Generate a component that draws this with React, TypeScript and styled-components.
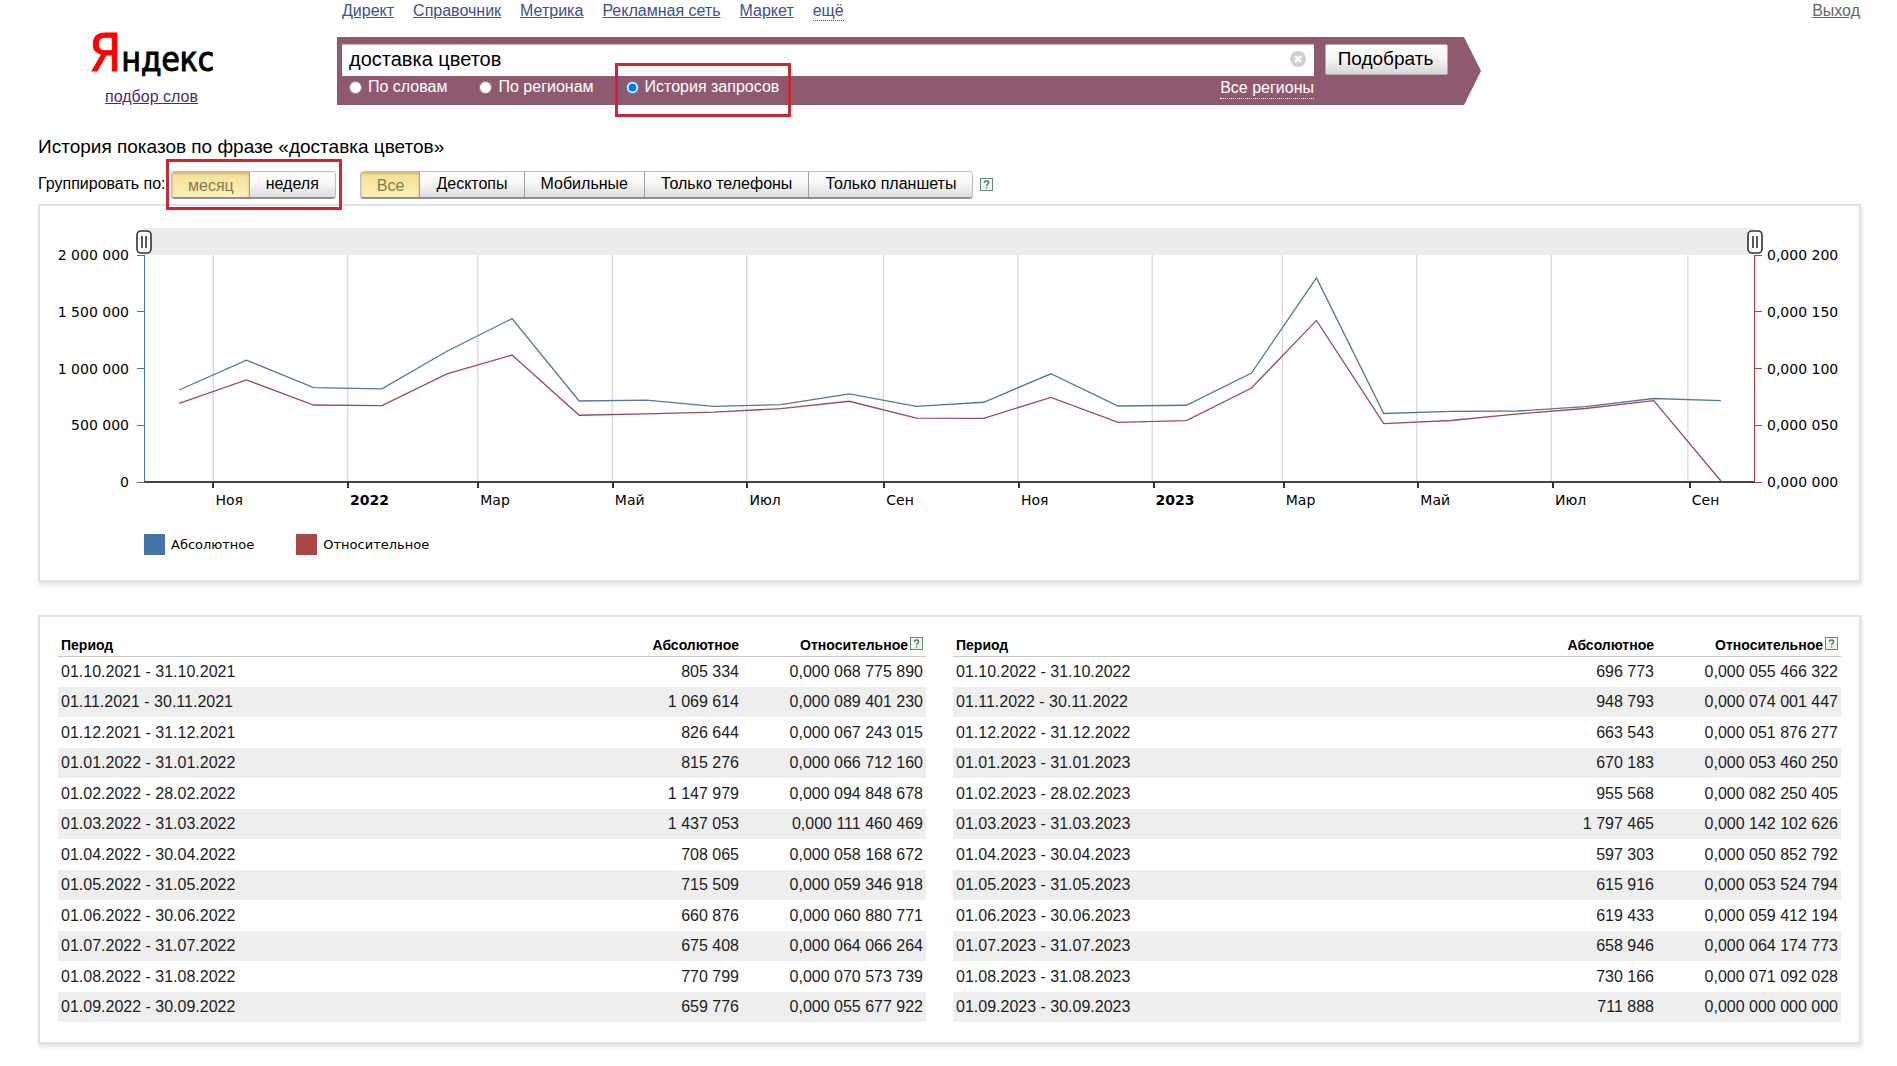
import React from 'react';
import styled, { createGlobalStyle, css } from 'styled-components';

const GlobalStyle = createGlobalStyle`
  *, *::before, *::after { box-sizing: border-box; }
  body {
    margin: 0;
    background: #fff;
    color: #000;
    font: 16px/20px "Liberation Sans", Arial, sans-serif;
  }
  button, input { font-family: inherit; }
`;

const chartFont = '"DejaVu Sans", Verdana, sans-serif';

/* ---------- header ---------- */

const Header = styled.header`
  display: grid;
  grid-template-columns: 337px minmax(0, 1fr) 416px;
`;

const Brand = styled.div`
  width: 303px;
  padding-top: 25px;
  text-align: center;
`;

const Logo = styled.a`
  display: block;
  height: 62px;
  color: #000;
  font: 33px/56px "DejaVu Sans Condensed", "DejaVu Sans", sans-serif;
  text-decoration: none;
  white-space: nowrap;
  -webkit-text-stroke: 1px currentColor;
`;

const LogoInitial = styled.span`
  color: #f00;
  font-size: 52px;
`;

const BrandLink = styled.a`
  color: #4a2a7a;
`;

const Services = styled.nav`
  display: flex;
  gap: 19px;
  height: 37px;
  padding: 1px 0 0 5px;
  white-space: nowrap;
`;

const ServiceLink = styled.a<{ $dotted?: boolean }>`
  color: #3a4f9a;
  ${(p) =>
    p.$dotted &&
    css`
      align-self: flex-start;
      line-height: 19px;
      text-decoration: none;
      border-bottom: 1px dotted #3a4f9a;
    `}
`;

const Exit = styled.a`
  justify-self: end;
  align-self: start;
  margin: 1px 37px 0 0;
  color: #666;
`;

const SearchForm = styled.form`
  display: grid;
  grid-template-columns: minmax(0, 1fr) 123px;
  grid-template-rows: 32px auto;
  column-gap: 11px;
  height: 68px;
  padding: 7px 33px 0 5px;
  background: #8f5a70;
  clip-path: polygon(0 0, calc(100% - 17px) 0, 100% 50%, calc(100% - 17px) 100%, 0 100%);
`;

const SearchField = styled.div`
  display: flex;
  align-items: flex-start;
  padding-right: 8px;
  background: #fff;
  border-top: 1px solid #cdb9c3;
`;

const SearchInput = styled.input`
  flex: 1;
  min-width: 0;
  height: 28px;
  padding: 0 7px;
  border: 0;
  outline: 0;
  background: transparent;
  color: #000;
  font-size: 20px;
`;

const ClearButton = styled.button`
  display: flex;
  padding: 6px 0 0;
  border: 0;
  background: none;
`;

const SubmitButton = styled.button`
  height: 31px;
  padding: 0 2px 2px 0;
  border: 1px solid #b9a9b1;
  border-radius: 2px;
  background: linear-gradient(#fff, #f4f4f4 50%, #d6d6d6);
  color: #000;
  font-size: 19px;
`;

const Modes = styled.div`
  display: flex;
  align-items: flex-start;
  padding: 1px 0 0 7px;
  color: #fff;
`;

const ModeOption = styled.label`
  display: flex;
  align-items: center;
  gap: 6px;
  margin-right: 32px;
  white-space: nowrap;
`;

const Radio = styled.input`
  width: 13px;
  height: 13px;
  margin: 0;
`;

const RegionsLink = styled.a`
  margin-left: auto;
  color: #fff;
  line-height: 21px;
  text-decoration: none;
  border-bottom: 1px dotted #fff;
  white-space: nowrap;
`;

const Marked = styled.div`
  position: relative;
  margin-right: 24px;
`;

const Mark = styled.span<{ $inset: string }>`
  position: absolute;
  inset: ${(p) => p.$inset};
  border: 3px solid #cd2734;
  pointer-events: none;
`;

const SearchArea = styled.div`
  position: relative;
`;

const ModeMark = styled.span`
  position: absolute;
  top: 63px;
  left: 278px;
  width: 176px;
  height: 54px;
  border: 3px solid #cd2734;
  pointer-events: none;
`;

/* ---------- page body ---------- */

const Main = styled.main`
  padding: 29px 36px 22px 38px;
`;

const Title = styled.h1`
  margin: 0;
  font-size: 19px;
  line-height: 22px;
  font-weight: 400;
`;

const Toolbar = styled.div`
  display: flex;
  align-items: center;
  height: 28px;
  margin: 13px 0 5px;
  white-space: nowrap;
`;

const ToolbarLabel = styled.span`
  width: 133px;
  padding-bottom: 2px;
`;

const Segments = styled.div`
  display: flex;
  height: 28px;
  border: 1px solid #bdbdbd;
  border-bottom: 2px solid #8f8f8f;
  border-radius: 4px;
  overflow: hidden;
`;

const Segment = styled.button<{ $active?: boolean }>`
  padding: 0 16px 2px;
  border: 0;
  background: linear-gradient(#fff, #f8f8f8 45%, #dcdcdc);
  color: #000;
  font-size: 16px;
  & + & {
    border-left: 1px solid #a0a0a0;
  }
  ${(p) =>
    p.$active &&
    css`
      padding: 3px 15px 0 16px;
      background: linear-gradient(#f6df95, #ffefb8);
      box-shadow: inset 0 2px 3px #c9b77c;
      color: #857a52;
    `}
`;

const HelpButton = styled.button`
  display: inline-flex;
  padding: 0;
  border: 0;
  background: none;
`;

const FilterHelp = styled.span`
  display: inline-flex;
  margin-left: 7px;
  padding-bottom: 2px;
`;

const Panel = styled.section`
  border: 2px solid #e2e2e2;
  background: #fff;
  box-shadow: 1px 3px 4px #e2e2e2;
`;

/* ---------- chart ---------- */

const ChartPanel = styled(Panel)`
  padding: 22px 0 25px;
  font: 14px/20px ${chartFont};
`;

const ChartGrid = styled.div`
  display: grid;
  grid-template-columns: 104px minmax(0, 1fr) 104px;
  grid-template-rows: 27px 227px 70px;
`;

const Track = styled.div`
  grid-column: 2;
  display: flex;
  align-items: center;
  justify-content: space-between;
  margin-left: -8px;
  margin-right: -8px;
  background: linear-gradient(#ececec, #ececec) center / calc(100% - 16px) 100% no-repeat;
`;

const Handle = styled.button`
  display: flex;
  z-index: 1;
  padding: 0;
  border: 0;
  background: none;
`;

const Scale = styled.div<{ $side: 'left' | 'right' }>`
  grid-row: 2;
  grid-column: ${(p) => (p.$side === 'left' ? 1 : 3)};
  display: flex;
  flex-direction: column;
  justify-content: space-between;
  align-items: ${(p) => (p.$side === 'left' ? 'flex-end' : 'flex-start')};
  margin: -10px 0;
  white-space: nowrap;
`;

const ScaleItem = styled.span<{ $side: 'left' | 'right' }>`
  display: flex;
  flex-direction: ${(p) => (p.$side === 'left' ? 'row' : 'row-reverse')};
  align-items: center;
  gap: ${(p) => (p.$side === 'left' ? 8 : 5)}px;
  &::after {
    content: '';
    width: 7px;
    height: 1px;
    background: ${(p) => (p.$side === 'left' ? '#4572a7' : '#aa4643')};
  }
`;

const Plot = styled.svg`
  grid-row: 2;
  grid-column: 2;
  display: block;
  width: 100%;
  height: 228px;
  border-left: 1px solid #4572a7;
  border-right: 1px solid #c0383c;
  border-bottom: 2px solid #444;
  overflow: visible;
`;

const Months = styled.div<{ $columns: string }>`
  grid-row: 3;
  grid-column: 2;
  display: grid;
  grid-template-columns: ${(p) => p.$columns};
`;

const Month = styled.span<{ $bold: boolean }>`
  padding: 8px 0 0 3px;
  font-weight: ${(p) => (p.$bold ? 700 : 400)};
  background: linear-gradient(#333, #333) 0 0 / 2px 6px no-repeat;
`;

const Legend = styled.ul`
  grid-column: 2;
  display: flex;
  gap: 42px;
  margin: -18px 0 0;
  padding: 0;
  list-style: none;
  font-size: 13px;
`;

const LegendItem = styled.li<{ $color: string }>`
  display: flex;
  align-items: center;
  gap: 6px;
  &::before {
    content: '';
    width: 21px;
    height: 21px;
    background: ${(p) => p.$color};
  }
`;

/* ---------- tables ---------- */

const TablesPanel = styled(Panel)`
  display: grid;
  grid-template-columns: minmax(0, 868fr) minmax(0, 888fr);
  gap: 27px;
  margin-top: 33px;
  padding: 13px 18px 20px;
`;

const Table = styled.table`
  width: 100%;
  align-self: start;
  border-collapse: collapse;
  table-layout: fixed;
`;

const HeadCell = styled.th<{ $right?: boolean; $width?: number }>`
  width: ${(p) => (p.$width ? `${p.$width}px` : 'auto')};
  height: 26px;
  padding: 4px 3px 0;
  border-bottom: 1px solid #c8c8c8;
  font-size: 14px;
  line-height: 16px;
  text-align: ${(p) => (p.$right ? 'right' : 'left')};
  white-space: nowrap;
`;

const HeadLabel = styled.span`
  display: inline-flex;
  align-items: flex-start;
  gap: 2px;
`;

const Row = styled.tr`
  height: 31px;
  &:nth-child(even) {
    height: 30px;
    background: #eee;
  }
`;

const Cell = styled.td<{ $right?: boolean }>`
  padding: 0 3px;
  color: #1c1c1c;
  text-align: ${(p) => (p.$right ? 'right' : 'left')};
  white-space: nowrap;
`;

/* ---------- data ---------- */

type Entry = { year: number; month: number; abs: number; rel: number };

const series: [number, number][] = [
  [805334, 68775890],
  [1069614, 89401230],
  [826644, 67243015],
  [815276, 66712160],
  [1147979, 94848678],
  [1437053, 111460469],
  [708065, 58168672],
  [715509, 59346918],
  [660876, 60880771],
  [675408, 64066264],
  [770799, 70573739],
  [659776, 55677922],
  [696773, 55466322],
  [948793, 74001447],
  [663543, 51876277],
  [670183, 53460250],
  [955568, 82250405],
  [1797465, 142102626],
  [597303, 50852792],
  [615916, 53524794],
  [619433, 59412194],
  [658946, 64174773],
  [730166, 71092028],
  [711888, 0],
];

const entries: Entry[] = series.map(([abs, rel], i) => ({
  year: 2021 + Math.floor((i + 9) / 12),
  month: ((i + 9) % 12) + 1,
  abs,
  rel,
}));

const daysIn = (e: Entry) => new Date(e.year, e.month, 0).getDate();
const pad = (n: number) => String(n).padStart(2, '0');
const groups = (s: string) => s.replace(/\B(?=(\d{3})+$)/g, '\u00a0');
const formatRel = (n: number) => `0,${String(n).padStart(12, '0').match(/\d{3}/g)!.join('\u00a0')}`;
const formatPeriod = (e: Entry) => {
  const tail = `${pad(e.month)}.${e.year}`;
  return `01.${tail} - ${daysIn(e)}.${tail}`;
};

const starts: number[] = [];
const totalDays = entries.reduce((sum, e) => {
  starts.push(sum);
  return sum + daysIn(e);
}, 0);

const HEIGHT = 1000;
const pointsOf = (value: (e: Entry) => number, max: number) =>
  entries
    .map((e, i) => `${starts[i] + daysIn(e) / 2},${HEIGHT - (value(e) / max) * HEIGHT}`)
    .join(' ');

const monthNames: Record<number, string> = { 3: 'Мар', 5: 'Май', 7: 'Июл', 9: 'Сен', 11: 'Ноя' };
const marks = entries
  .map((e, i) => ({ e, at: starts[i] }))
  .filter(({ e }) => e.month % 2 === 1);
const monthColumns = [0, ...marks.map((m) => m.at)]
  .map((at, i, all) => `minmax(0, ${(all[i + 1] ?? totalDays) - at}fr)`)
  .join(' ');

const absScale = ['2 000 000', '1 500 000', '1 000 000', '500 000', '0'];
const relScale = ['0,000 200', '0,000 150', '0,000 100', '0,000 050', '0,000 000'];
const services = ['Директ', 'Справочник', 'Метрика', 'Рекламная сеть', 'Маркет'];
const devices = ['Все', 'Десктопы', 'Мобильные', 'Только телефоны', 'Только планшеты'];

/* ---------- pieces ---------- */

const Help = () => (
  <HelpButton type="button" aria-label="Справка">
    <svg width="13" height="13" viewBox="0 0 13 13">
      <rect x="0.5" y="0.5" width="12" height="12" fill="#eef6f0" stroke="#5f8f70" />
      <path d="M4.4 4.8C4.5 2.5 8.6 2.5 8.6 4.8C8.6 6.3 6.5 6.2 6.5 8M6.5 9.2V10.6" fill="none" stroke="#4f7f60" strokeWidth="1.5" />
    </svg>
  </HelpButton>
);

const RangeHandle = ({ label }: { label: string }) => (
  <Handle type="button" aria-label={label}>
    <svg width="16" height="24" viewBox="0 0 16 24">
      <rect x="1" y="1" width="14" height="22" rx="4" fill="#fff" stroke="#333" strokeWidth="1.6" />
      <path d="M6 6V18M10 6V18" stroke="#333" strokeWidth="1.6" />
    </svg>
  </Handle>
);

const StatsTable = ({ rows }: { rows: Entry[] }) => (
  <Table>
    <thead>
      <tr>
        <HeadCell scope="col">Период</HeadCell>
        <HeadCell scope="col" $right $width={184}>Абсолютное</HeadCell>
        <HeadCell scope="col" $right $width={184}>
          <HeadLabel>
            Относительное
            <Help />
          </HeadLabel>
        </HeadCell>
      </tr>
    </thead>
    <tbody>
      {rows.map((e) => (
        <Row key={`${e.year}-${e.month}`}>
          <Cell>{formatPeriod(e)}</Cell>
          <Cell $right>{groups(String(e.abs))}</Cell>
          <Cell $right>{formatRel(e.rel)}</Cell>
        </Row>
      ))}
    </tbody>
  </Table>
);

const Chart = () => (
  <ChartPanel aria-label="График показов">
    <ChartGrid>
      <Track>
        <RangeHandle label="Начало периода" />
        <RangeHandle label="Конец периода" />
      </Track>
      <Scale $side="left">
        {absScale.map((t) => (
          <ScaleItem key={t} $side="left">{t}</ScaleItem>
        ))}
      </Scale>
      <Plot viewBox={`0 0 ${totalDays} ${HEIGHT}`} preserveAspectRatio="none">
        {marks.map(({ at }) => (
          <line key={at} x1={at} x2={at} y1={0} y2={HEIGHT} stroke="#d6d6d6" strokeWidth="1.2" vectorEffect="non-scaling-stroke" />
        ))}
        <polyline points={pointsOf((e) => e.abs, 2e6)} fill="none" stroke="#55789a" strokeWidth="1.3" vectorEffect="non-scaling-stroke" />
        <polyline points={pointsOf((e) => e.rel, 2e8)} fill="none" stroke="#a04a55" strokeWidth="1.3" vectorEffect="non-scaling-stroke" />
      </Plot>
      <Scale $side="right">
        {relScale.map((t) => (
          <ScaleItem key={t} $side="right">{t}</ScaleItem>
        ))}
      </Scale>
      <Months $columns={monthColumns}>
        <span />
        {marks.map(({ e, at }) => (
          <Month key={at} $bold={e.month === 1}>
            {e.month === 1 ? e.year : monthNames[e.month]}
          </Month>
        ))}
      </Months>
      <Legend>
        <LegendItem $color="#4572a7">Абсолютное</LegendItem>
        <LegendItem $color="#aa4643">Относительное</LegendItem>
      </Legend>
    </ChartGrid>
  </ChartPanel>
);

export default function App() {
  return (
    <>
      <GlobalStyle />
      <Header>
        <Brand>
          <Logo href="#">
            <LogoInitial>Я</LogoInitial>ндекс
          </Logo>
          <BrandLink href="#">подбор слов</BrandLink>
        </Brand>
        <SearchArea>
          <Services>
            {services.map((s) => (
              <ServiceLink key={s} href="#">{s}</ServiceLink>
            ))}
            <ServiceLink href="#" $dotted>ещё</ServiceLink>
          </Services>
          <SearchForm onSubmit={(ev) => ev.preventDefault()}>
            <SearchField>
              <SearchInput aria-label="Слова для подбора" defaultValue="доставка цветов" />
              <ClearButton type="button" aria-label="Очистить">
                <svg width="16" height="16" viewBox="0 0 16 16">
                  <circle cx="8" cy="8" r="8" fill="#d0d0d0" />
                  <path d="M5 5L11 11M11 5L5 11" stroke="#fff" strokeWidth="2.4" />
                </svg>
              </ClearButton>
            </SearchField>
            <SubmitButton type="submit">Подобрать</SubmitButton>
            <Modes>
              <ModeOption><Radio type="radio" name="mode" />По словам</ModeOption>
              <ModeOption><Radio type="radio" name="mode" />По регионам</ModeOption>
              <ModeOption><Radio type="radio" name="mode" defaultChecked />История запросов</ModeOption>
              <RegionsLink href="#">Все регионы</RegionsLink>
            </Modes>
          </SearchForm>
          <ModeMark />
        </SearchArea>
        <Exit href="#">Выход</Exit>
      </Header>
      <Main>
        <Title>История показов по фразе «доставка цветов»</Title>
        <Toolbar>
          <ToolbarLabel>Группировать по:</ToolbarLabel>
          <Marked>
            <Segments>
              <Segment type="button" aria-pressed="true" $active>месяц</Segment>
              <Segment type="button" aria-pressed="false">неделя</Segment>
            </Segments>
            <Mark $inset="-12px -6px -11px -5px" />
          </Marked>
          <Segments>
            {devices.map((d, i) => (
              <Segment key={d} type="button" aria-pressed={i === 0} $active={i === 0}>{d}</Segment>
            ))}
          </Segments>
          <FilterHelp><Help /></FilterHelp>
        </Toolbar>
        <Chart />
        <TablesPanel aria-label="Статистика по месяцам">
          <StatsTable rows={entries.slice(0, 12)} />
          <StatsTable rows={entries.slice(12)} />
        </TablesPanel>
      </Main>
    </>
  );
}
